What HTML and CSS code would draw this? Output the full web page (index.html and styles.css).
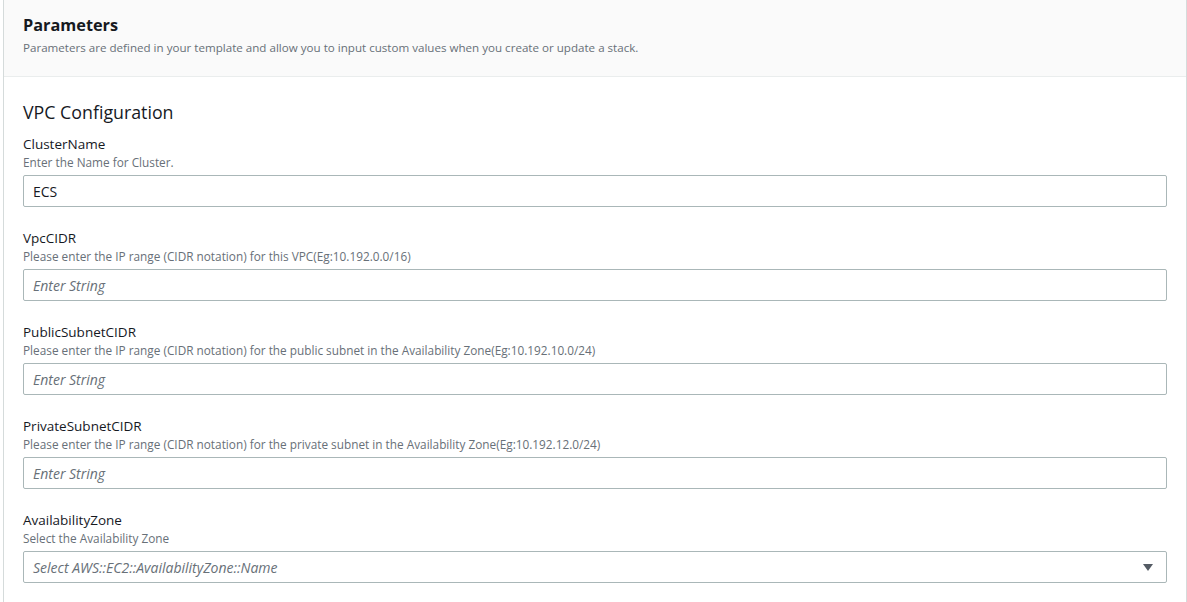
FILE: index.html
```html
<!DOCTYPE html>
<html>
<head>
	<meta charset="utf-8">
	<title>Parameters</title>
	<link rel="stylesheet" href="styles.css">
</head>
<body>
	<div class="panel">
		<!-- header -->
		<div class="panel-head">
			<h2 class="title">Parameters</h2>
			<p class="desc">Parameters are defined in your template and allow you to input custom values when you create or update a stack.</p>
		</div>

		<div class="panel-body">
			<h3 class="group">VPC Configuration</h3>

			<div class="field">
				<label class="label">ClusterName</label>
				<div class="hint">Enter the Name for Cluster.</div>
				<input class="input" type="text" value="ECS">
			</div>

			<div class="field">
				<label class="label">VpcCIDR</label>
				<div class="hint">Please enter the IP range (CIDR notation) for this VPC(Eg:10.192.0.0/16)</div>
				<input class="input" type="text" placeholder="Enter String">
			</div>

			<div class="field">
				<label class="label">PublicSubnetCIDR</label>
				<div class="hint">Please enter the IP range (CIDR notation) for the public subnet in the Availability Zone(Eg:10.192.10.0/24)</div>
				<input class="input" type="text" placeholder="Enter String">
			</div>

			<div class="field">
				<label class="label">PrivateSubnetCIDR</label>
				<div class="hint">Please enter the IP range (CIDR notation) for the private subnet in the Availability Zone(Eg:10.192.12.0/24)</div>
				<input class="input" type="text" placeholder="Enter String">
			</div>

			<div class="field">
				<label class="label">AvailabilityZone</label>
				<div class="hint">Select the Availability Zone</div>
				<div class="select">
					<span class="select-text">Select AWS::EC2::AvailabilityZone::Name</span>
					<span class="caret"></span>
				</div>
			</div>
		</div>
	</div>
</body>
</html>
```

FILE: styles.css
```css
body {
	margin: 0;
	background: #fff;
	font-family: "Open Sans", "Noto Sans", sans-serif;
	color: #16191f;
}

/* outer card */
.panel {
	margin-left: 3px;
	width: 1182px;
	border-left: 1px solid #d5dbdb;
	border-right: 1px solid #d5dbdb;
	min-height: 602px;
}

.panel-head {
	background: #fafafa;
	border-bottom: 1px solid #eaeded;
	padding: 14px 19px 20px;
}

.title {
	margin: 0;
	font-size: 16.3px;
	font-weight: 700;
	line-height: 22px;
}

.desc {
	margin: 4px 0 0;
	font-size: 11.6px;
	line-height: 16px;
	color: #687078;
}

.panel-body {
	padding: 23px 19px 0;
}

.group {
	margin: 0 0 10px;
	font-size: 17.8px;
	font-weight: 400;
	line-height: 24px;
}

.field {
	margin-bottom: 21px;
}

.label {
	display: block;
	font-size: 13.5px;
	line-height: 20px;
}

.hint {
	font-size: 11.8px;
	line-height: 16px;
	color: #687078;
	margin-bottom: 5px;
}

.input,
.select {
	box-sizing: border-box;
	display: block;
	width: 1144px;
	height: 32px;
	border: 1px solid #aab7b8;
	border-radius: 2px;
	padding: 0 9px;
	font-family: inherit;
	font-size: 14px;
	color: #16191f;
	background: #fff;
	outline: none;
}

.input::placeholder {
	color: #687078;
	font-style: italic;
}

.select {
	display: flex;
	align-items: center;
	justify-content: space-between;
}

.select-text {
	color: #687078;
	font-style: italic;
}

.caret {
	width: 0;
	height: 0;
	border-left: 5px solid transparent;
	border-right: 5px solid transparent;
	border-top: 7px solid #545b64;
	margin-right: 4px;
}
```
